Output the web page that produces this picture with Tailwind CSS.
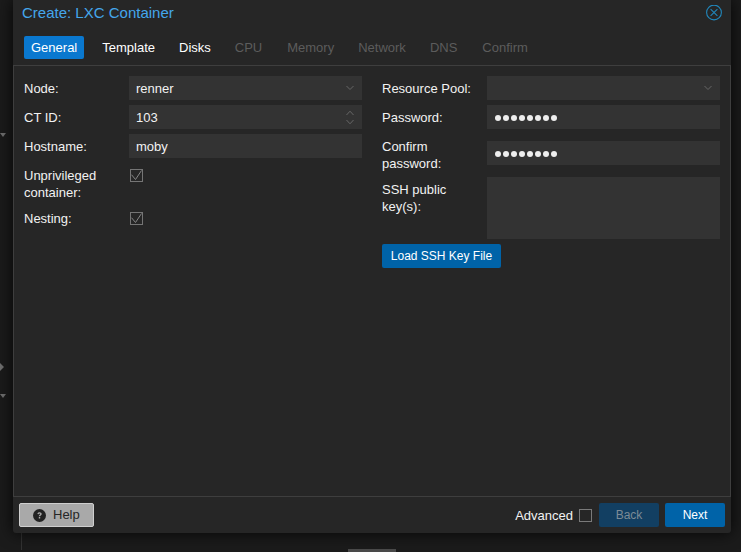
<!DOCTYPE html>
<html lang="en">
<head>
    <meta charset="UTF-8">
    <title>Create: LXC Container</title>
    <script src="https://cdn.jsdelivr.net/npm/@tailwindcss/browser@4"></script>
</head>
<body class="relative h-[552px] w-[741px] overflow-hidden bg-[#1b1b1b] font-['Liberation_Sans',Arial,sans-serif] text-[13px] text-[#f2f2f2]">

    <!-- Bits of the page behind the dialog -->
    <div class="absolute left-0 top-[133px] h-0 w-0 border-x-[3px] border-t-[4px] border-x-transparent border-t-[#707070]"></div>
    <div class="absolute left-0 top-[363px] h-0 w-0 border-y-[4px] border-l-[4px] border-y-transparent border-l-[#707070]"></div>
    <div class="absolute left-0 top-[394px] h-0 w-0 border-x-[3px] border-t-[4px] border-x-transparent border-t-[#707070]"></div>
    <div class="absolute left-[21px] top-[533px] h-[17px] w-px bg-[#333]"></div>
    <div class="absolute left-[348px] top-[549px] h-[3px] w-[48px] bg-[#4a4a4a]"></div>

    <!-- Dialog window -->
    <div class="absolute left-[13px] top-0 flex h-[533px] w-[718px] flex-col rounded-b-[3px] bg-[#262626] shadow-[0_0_16px_rgba(0,0,0,0.85)]">

        <!-- Title -->
        <div class="flex h-[36px] shrink-0 items-start justify-between pl-[9px] pr-[9px] pt-[5px]">
            <span class="text-[15px] leading-[16px] text-[#44a6ec]">Create: LXC Container</span>
            <svg width="16" height="16" viewBox="0 0 16 16" fill="none" stroke="#2186ba" stroke-width="1.1">
                <circle cx="8" cy="7.5" r="7.4"/>
                <path d="M4.6 4.1 11.4 10.9M11.4 4.1 4.6 10.9"/>
            </svg>
        </div>

        <!-- Tabs -->
        <div class="flex h-[29px] shrink-0 items-start pl-[11px] text-[13px] leading-[23px]">
            <div class="h-[23px] rounded-[2px] bg-[#0a78cf] px-[7px] text-white">General</div>
            <div class="ml-[11px] px-[7px] text-white">Template</div>
            <div class="ml-[10px] px-[7px] text-white">Disks</div>
            <div class="ml-[10px] px-[7px] text-[#5c5c5c]">CPU</div>
            <div class="ml-[11px] px-[7px] text-[#5c5c5c]">Memory</div>
            <div class="ml-[10px] px-[7px] text-[#5c5c5c]">Network</div>
            <div class="ml-[10px] px-[7px] text-[#5c5c5c]">DNS</div>
            <div class="ml-[11px] px-[7px] text-[#5c5c5c]">Confirm</div>
        </div>

        <!-- Form panel -->
        <div class="flex min-h-0 flex-1 border border-[#3e3e3e] pt-[10px]">

            <!-- Left column -->
            <div class="ml-[10px] flex w-[338px] flex-col leading-[17px]">
                <div class="flex h-[24px] items-center">
                    <span class="w-[105px]">Node:</span>
                    <div class="flex h-[24px] w-[233px] items-center justify-between bg-[#333333] pl-[7px] pr-[8px]">
                        <span>renner</span>
                        <svg width="8" height="6" viewBox="0 0 8 6" fill="none" stroke="#666" stroke-width="1"><path d="M.5 1 4 4.5 7.5 1"/></svg>
                    </div>
                </div>
                <div class="mt-[5px] flex h-[24px] items-center">
                    <span class="w-[105px]">CT ID:</span>
                    <div class="flex h-[24px] w-[233px] items-center justify-between bg-[#333333] pl-[7px] pr-[8px]">
                        <span>103</span>
                        <svg width="8" height="15" viewBox="0 0 8 15" fill="none" stroke="#666" stroke-width="1"><path d="M.5 5 4 1.2 7.5 5M.5 10 4 13.8 7.5 10"/></svg>
                    </div>
                </div>
                <div class="mt-[5px] flex h-[24px] items-center">
                    <span class="w-[105px]">Hostname:</span>
                    <div class="flex h-[24px] w-[233px] items-center bg-[#333333] pl-[7px]">moby</div>
                </div>
                <div class="mt-[9px] flex">
                    <span class="w-[105px]">Unprivileged<br>container:</span>
                    <svg class="ml-[1px] mt-[2px]" width="13" height="13" viewBox="0 0 13 13" fill="none"><rect x=".5" y=".5" width="12" height="12" stroke="#757575"/><path d="M1.5 5.7 5.5 10.5 11.5 1.5" stroke="#858585" stroke-width="1"/></svg>
                </div>
                <div class="mt-[9px] flex">
                    <span class="w-[105px]">Nesting:</span>
                    <svg class="ml-[1px] mt-[2px]" width="13" height="13" viewBox="0 0 13 13" fill="none"><rect x=".5" y=".5" width="12" height="12" stroke="#757575"/><path d="M1.5 5.7 5.5 10.5 11.5 1.5" stroke="#858585" stroke-width="1"/></svg>
                </div>
            </div>

            <!-- Right column -->
            <div class="ml-[20px] flex w-[338px] flex-col leading-[17px]">
                <div class="flex h-[24px] items-center">
                    <span class="w-[105px]">Resource Pool:</span>
                    <div class="flex h-[24px] w-[233px] items-center justify-end bg-[#333333] pr-[8px]">
                        <svg width="8" height="6" viewBox="0 0 8 6" fill="none" stroke="#666" stroke-width="1"><path d="M.5 1 4 4.5 7.5 1"/></svg>
                    </div>
                </div>
                <div class="mt-[5px] flex h-[24px] items-center">
                    <span class="w-[105px]">Password:</span>
                    <div class="flex h-[24px] w-[233px] items-center gap-[2px] bg-[#333333] pl-[8px] pt-[2px]">
                        <i class="size-[6px] rounded-full bg-[#eee]"></i><i class="size-[6px] rounded-full bg-[#eee]"></i><i class="size-[6px] rounded-full bg-[#eee]"></i><i class="size-[6px] rounded-full bg-[#eee]"></i><i class="size-[6px] rounded-full bg-[#eee]"></i><i class="size-[6px] rounded-full bg-[#eee]"></i><i class="size-[6px] rounded-full bg-[#eee]"></i><i class="size-[6px] rounded-full bg-[#eee]"></i>
                    </div>
                </div>
                <div class="mt-[9px] flex">
                    <span class="w-[105px]">Confirm<br>password:</span>
                    <div class="mt-[3px] flex h-[24px] w-[233px] items-center gap-[2px] bg-[#333333] pl-[8px] pt-[2px]">
                        <i class="size-[6px] rounded-full bg-[#eee]"></i><i class="size-[6px] rounded-full bg-[#eee]"></i><i class="size-[6px] rounded-full bg-[#eee]"></i><i class="size-[6px] rounded-full bg-[#eee]"></i><i class="size-[6px] rounded-full bg-[#eee]"></i><i class="size-[6px] rounded-full bg-[#eee]"></i><i class="size-[6px] rounded-full bg-[#eee]"></i><i class="size-[6px] rounded-full bg-[#eee]"></i>
                    </div>
                </div>
                <div class="mt-[5px] flex">
                    <span class="w-[105px] pt-[4px]">SSH public<br>key(s):</span>
                    <div class="h-[62px] w-[233px] bg-[#333333]"></div>
                </div>
                <button class="mt-[5px] h-[24px] w-[119px] rounded-[2px] bg-[#0063a8] text-[12px] text-white">Load SSH Key File</button>
            </div>
        </div>

        <!-- Footer -->
        <div class="flex h-[36px] shrink-0 items-center pl-[6px] pr-[6px]">
            <button class="flex h-[24px] w-[75px] items-center rounded-[2px] border border-[#cfcfcf] bg-[#a9a9a9] pl-[13px] text-[13px] text-[#262626]">
                <svg width="13" height="13" viewBox="0 0 13 13"><circle cx="6.5" cy="6.5" r="6.5" fill="#222"/><path d="M4.4 5.1C4.5 3.8 5.4 3.2 6.6 3.2 7.8 3.2 8.7 3.9 8.7 5 8.7 6.2 7.4 6.4 7.2 7.3H5.8C5.8 5.9 7.2 5.7 7.2 5 7.2 4.6 6.9 4.4 6.5 4.4 6.1 4.4 5.8 4.7 5.7 5.2Z" fill="#a9a9a9"/><rect x="5.8" y="8" width="1.4" height="1.5" fill="#a9a9a9"/></svg>
                <span class="ml-[7px]">Help</span>
            </button>
            <span class="ml-auto pt-[1px]">Advanced</span>
            <div class="ml-[6px] size-[13px] border border-[#7a7a7a]"></div>
            <button class="ml-[7px] h-[24px] w-[60px] rounded-[2px] bg-[#123f62] text-[12px] text-[#7d8b96]">Back</button>
            <button class="ml-[6px] h-[24px] w-[60px] rounded-[2px] bg-[#0063a8] text-[12px] text-white">Next</button>
        </div>
    </div>
</body>
</html>
